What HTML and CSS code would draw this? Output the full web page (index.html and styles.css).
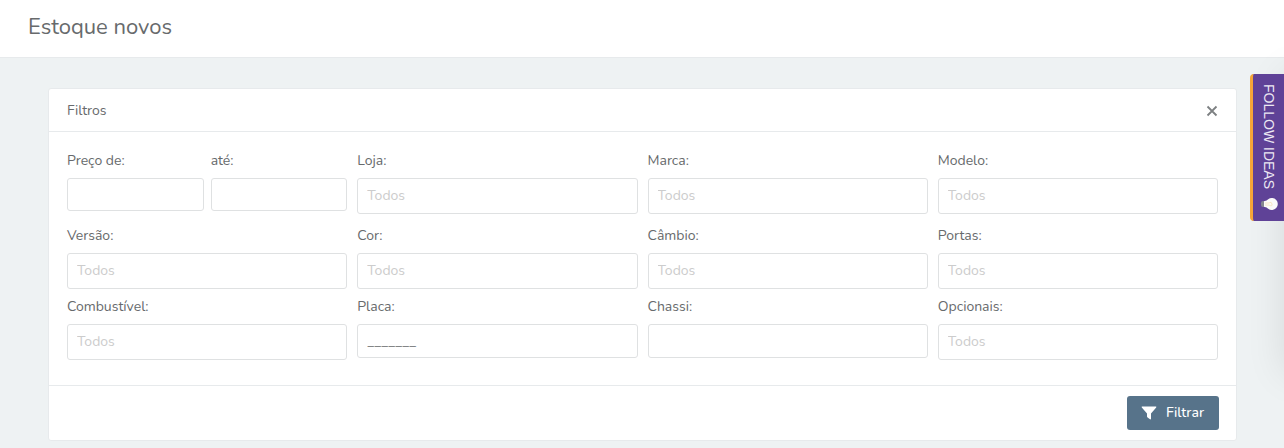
FILE: index.html
```html
<!DOCTYPE html>
<html lang="pt-BR">
<head>
<meta charset="utf-8">
<meta name="viewport" content="width=device-width, initial-scale=1">
<title>Estoque novos</title>
<link rel="stylesheet" href="styles.css">
</head>
<body>
<header class="page-header"><h1 class="page-title">Estoque novos</h1></header>
<main class="page-main">
  <form class="panel">
    <div class="panel-header">
      <h2 class="panel-title">Filtros</h2>
      <button class="close" type="button" aria-label="Fechar">
        <svg class="close-icon" viewBox="0 0 14 14" aria-hidden="true"><path d="M2.5 2.5 11.5 11.5M11.5 2.5 2.5 11.5"/></svg>
      </button>
    </div>
    <div class="panel-body">
      <div class="row row-first">
        <div class="range">
          <div class="field"><label for="de">Preço de:</label><input class="control control-short" id="de" type="text"></div>
          <div class="field"><label for="ate">até:</label><input class="control control-short" id="ate" type="text"></div>
        </div>
        <div class="field"><label for="loja">Loja:</label><input class="control" id="loja" type="text" placeholder="Todos"></div>
        <div class="field"><label for="marca">Marca:</label><input class="control" id="marca" type="text" placeholder="Todos"></div>
        <div class="field"><label for="modelo">Modelo:</label><input class="control" id="modelo" type="text" placeholder="Todos"></div>
      </div>
      <div class="row">
        <div class="field"><label for="versao">Versão:</label><input class="control" id="versao" type="text" placeholder="Todos"></div>
        <div class="field"><label for="cor">Cor:</label><input class="control" id="cor" type="text" placeholder="Todos"></div>
        <div class="field"><label for="cambio">Câmbio:</label><input class="control" id="cambio" type="text" placeholder="Todos"></div>
        <div class="field"><label for="portas">Portas:</label><input class="control" id="portas" type="text" placeholder="Todos"></div>
      </div>
      <div class="row">
        <div class="field"><label for="combustivel">Combustível:</label><input class="control" id="combustivel" type="text" placeholder="Todos"></div>
        <div class="field"><label for="placa">Placa:</label><input class="control control-medium" id="placa" type="text" value="_______"></div>
        <div class="field"><label for="chassi">Chassi:</label><input class="control control-medium" id="chassi" type="text"></div>
        <div class="field"><label for="opcionais">Opcionais:</label><input class="control" id="opcionais" type="text" placeholder="Todos"></div>
      </div>
    </div>
    <div class="panel-footer">
      <button class="submit" type="submit">
        <svg class="filter-icon" viewBox="0 0 16 14" aria-hidden="true"><path d="M1.2 0.5H14.8Q15.8 0.6 15.2 1.6L10 7.6V12.8Q9.8 13.7 9 13.3L6.6 11.5Q6 11 6 10.4V7.6L0.8 1.6Q0.2 0.6 1.2 0.5Z"/></svg>
        Filtrar
      </button>
    </div>
  </form>
</main>
<aside class="drawer" aria-hidden="true"></aside>
<button class="ideas" type="button">
  <span>FOLLOW IDEAS</span>
  <svg class="bulb" viewBox="0 0 18 14" aria-hidden="true">
    <rect x="1" y="4" width="5" height="6" rx="2" fill="#85858f"/>
    <path d="M4 4.2Q7 3.8 8.2 2.2A6 6 0 1 1 8.2 11.8Q7 10.2 4 9.8Z" fill="#fbfafa"/>
    <path d="M5 6H9Q11.5 4 12 7T9 8H5" fill="none" stroke="#f6dfb8" stroke-width="0.8"/>
  </svg>
</button>
</body>
</html>
```
FILE: styles.css
```css
* { box-sizing: border-box; }
body {
  margin: 0;
  min-height: 100vh;
  background: #eef2f3;
  color: #676a6c;
  font: 14px/22px Nunito, Lato, sans-serif;
  overflow-x: hidden;
}
h1, h2 { margin: 0; font-weight: 400; }
input, button { font: inherit; }
.page-header {
  padding: 12px 28px 15px;
  background: #fff;
  border-bottom: 1px solid #e7eaec;
}
.page-title { font-size: 22px; line-height: 30px; }
.page-main { padding: 30px 47px 7px 48px; }
.panel { background: #fff; border: 1px solid #e7eaec; border-radius: 3px; }
.panel-header {
  display: flex;
  align-items: center;
  justify-content: space-between;
  padding: 11px 17px 9px 18px;
  border-bottom: 1px solid #e7eaec;
}
.panel-title { font-size: 14px; line-height: 22px; }
.close { display: flex; padding: 0; border: 0; background: none; }
.close-icon { width: 14px; height: 14px; fill: none; stroke: #7d8082; stroke-width: 1.8; }
.panel-body { padding: 18px 18px 25px; }
.row {
  display: grid;
  grid-template-columns: repeat(4, minmax(0, 1fr));
  gap: 10px;
}
.range { display: grid; grid-template-columns: 1fr 1fr; gap: 7px; }
.field { display: flex; flex-direction: column; gap: 6px; min-width: 0; }
.row + .row { margin-top: 7px; }
.row-first + .row { margin-top: 11px; }
.control {
  width: 100%;
  height: 36px;
  padding: 0 9px 2px;
  border: 1px solid #dfe1e2;
  border-radius: 3px;
  background: #fff;
  color: #676a6c;
}
.control::placeholder { color: #ccc; opacity: 1; }
.control-short { height: 33px; }
.control-medium { height: 34px; padding-bottom: 0; }
.panel-footer {
  display: flex;
  justify-content: flex-end;
  padding: 10px 17px;
  border-top: 1px solid #e7eaec;
}
.submit {
  display: flex;
  align-items: center;
  gap: 9px;
  height: 34px;
  padding: 0 15px 0 14px;
  border: 0;
  border-radius: 3px;
  background: #57738a;
  color: #fff;
  font-weight: 500;
}
.filter-icon { width: 16px; height: 14px; fill: #fff; }
.drawer {
  position: fixed;
  top: 74px;
  bottom: 74px;
  left: 100%;
  width: 300px;
  box-shadow: 0 0 36px rgba(0, 0, 0, 0.1);
}
.ideas {
  position: fixed;
  top: 74px;
  right: 0;
  display: flex;
  align-items: center;
  gap: 8px;
  padding: 10px 4px;
  border: 0;
  border-left: 3px solid #f5a638;
  border-radius: 4px 0 0 4px;
  background: #5f4297;
  color: #ece8f3;
  font: 14px/23px "Liberation Sans", Arial, sans-serif;
  writing-mode: vertical-rl;
}
.bulb { width: 18px; height: 14px; }
```
